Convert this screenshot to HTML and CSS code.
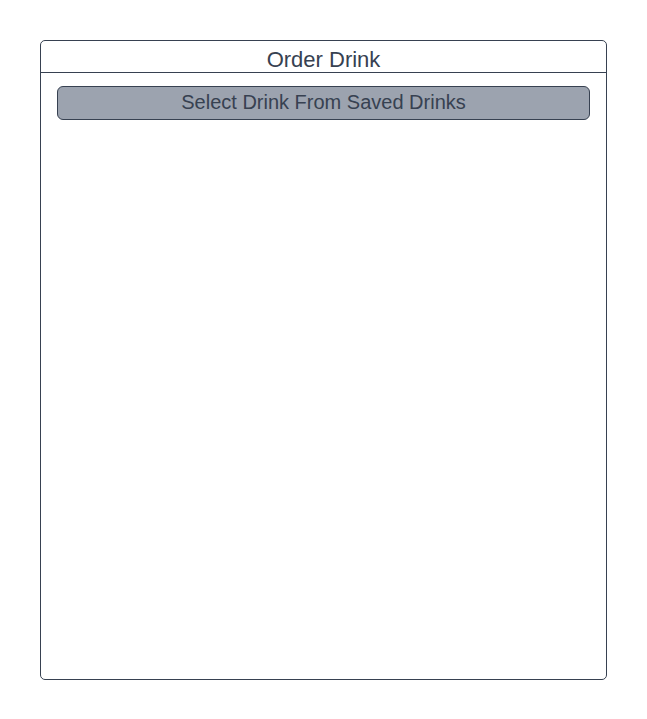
FILE: index.html
```html
<!DOCTYPE html>
<html>
<head>
<meta charset="utf-8">
<link rel="stylesheet" href="styles.css">
</head>
<body>
<div class="panel">
  <div class="panel-header">Order Drink</div>
  <div class="panel-body">
    <button class="select-btn">Select Drink From Saved Drinks</button>
  </div>
</div>
</body>
</html>
```
FILE: styles.css
```css
html, body {
  margin: 0;
  padding: 0;
  background: #ffffff;
  font-family: "Liberation Sans", Arial, sans-serif;
  color: #374151;
}
body {
  padding: 40px;
}
.panel {
  box-sizing: border-box;
  width: 567px;
  height: 640px;
  border: 1px solid #374151;
  border-radius: 5px;
  display: flex;
  flex-direction: column;
}
.panel-header {
  box-sizing: border-box;
  height: 32px;
  border-bottom: 1px solid #374151;
  display: flex;
  align-items: center;
  justify-content: center;
  font-size: 22px;
  line-height: 26px;
  padding-top: 6px;
}
.panel-body {
  padding: 13px 16px;
}
.select-btn {
  box-sizing: border-box;
  width: 100%;
  height: 34px;
  background: #9ca3af;
  border: 1px solid #374151;
  border-radius: 6px;
  font-family: inherit;
  font-size: 20px;
  line-height: 24px;
  color: #374151;
  padding: 0 0 2px 0;
  display: block;
}
```
